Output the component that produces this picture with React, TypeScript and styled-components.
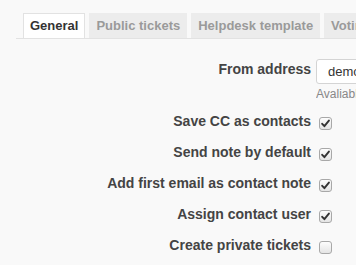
import styled, { createGlobalStyle } from "styled-components";

const GlobalStyle = createGlobalStyle`
  html, body {
    margin: 0;
    padding: 0;
    background: #f9f9f9;
    font-family: "Liberation Sans", Arial, sans-serif;
    overflow: hidden;
  }
`;

const tabs = ["General", "Public tickets", "Helpdesk template", "Voting"];

const checkboxes = [
  { label: "Save CC as contacts", checked: true },
  { label: "Send note by default", checked: true },
  { label: "Add first email as contact note", checked: true },
  { label: "Assign contact user", checked: true },
  { label: "Create private tickets", checked: false },
];

export default function App() {
  return (
    <>
      <GlobalStyle />
      <StyledPage>
        <StyledTabs>
          {tabs.map((tab, i) => (
            <StyledTab key={tab} $active={i === 0}>
              {tab}
            </StyledTab>
          ))}
        </StyledTabs>
        <StyledForm>
          <StyledRow>
            <StyledLabel>From address</StyledLabel>
            <StyledControls>
              <StyledInput defaultValue="demo@helpdesk.example.com" />
              <StyledHelp>Avaliable placeholders for sender name</StyledHelp>
            </StyledControls>
          </StyledRow>
          {checkboxes.map((item) => (
            <StyledRow key={item.label}>
              <StyledLabel>{item.label}</StyledLabel>
              <StyledControls>
                <StyledCheckbox>
                  {item.checked && (
                    <svg width="9" height="9" viewBox="0 0 9 9">
                      <path
                        d="M1.2 4.8 L3.4 7.2 L7.9 1.6"
                        fill="none"
                        stroke="#333"
                        strokeWidth="1.9"
                        strokeLinecap="round"
                        strokeLinejoin="round"
                      />
                    </svg>
                  )}
                </StyledCheckbox>
              </StyledControls>
            </StyledRow>
          ))}
        </StyledForm>
      </StyledPage>
    </>
  );
}

const StyledPage = styled.div`
  width: 356px;
  height: 265px;
  padding-top: 13px;
  box-sizing: border-box;
`;

const StyledTabs = styled.ul`
  display: flex;
  gap: 4px;
  margin: 0 0 0 16px;
  padding: 0 0 0 7px;
  list-style: none;
  border-bottom: 1px solid #e2e2e2;
  white-space: nowrap;
  overflow: hidden;
`;

const StyledTab = styled.li<{ $active?: boolean }>`
  flex: none;
  height: 26px;
  margin-bottom: -1px;
  padding: 0 6px;
  box-sizing: border-box;
  line-height: 24px;
  font-size: 13px;
  font-weight: bold;
  color: ${(p) => (p.$active ? "#333" : "#9a9a9a")};
  background: ${(p) => (p.$active ? "#fff" : "#ececec")};
  border: 1px solid ${(p) => (p.$active ? "#e2e2e2" : "transparent")};
  border-bottom-color: ${(p) => (p.$active ? "#fff" : "transparent")};
`;

const StyledForm = styled.div`
  margin-top: 20px;
  display: flex;
  flex-direction: column;
  gap: 11px;
`;

const StyledRow = styled.div`
  display: grid;
  grid-template-columns: 311px 1fr;
  column-gap: 5px;
  align-items: start;
  &:first-child {
    margin-bottom: -3px;
  }
`;

const StyledLabel = styled.div`
  text-align: right;
  font-size: 14px;
  font-weight: bold;
  line-height: 20px;
  color: #444;
  white-space: nowrap;
`;

const StyledControls = styled.div`
  min-width: 0;
  overflow: hidden;
`;

const StyledInput = styled.input`
  display: block;
  width: 200px;
  height: 25px;
  box-sizing: border-box;
  padding: 0 11px;
  border: 1px solid #d4d4d4;
  border-radius: 3px;
  background: #fff;
  font-family: "Liberation Sans", Arial, sans-serif;
  font-size: 13px;
  color: #333;
  outline: none;
`;

const StyledHelp = styled.div`
  margin-top: 2px;
  font-size: 12px;
  line-height: 17px;
  color: #888;
  white-space: nowrap;
`;

const StyledCheckbox = styled.span`
  display: flex;
  align-items: center;
  justify-content: center;
  width: 13px;
  height: 13px;
  margin: 6px 0 0 3px;
  box-sizing: border-box;
  border: 1px solid #a8a8a8;
  border-radius: 3px;
  background: linear-gradient(#fdfdfd, #e4e4e4);
`;
